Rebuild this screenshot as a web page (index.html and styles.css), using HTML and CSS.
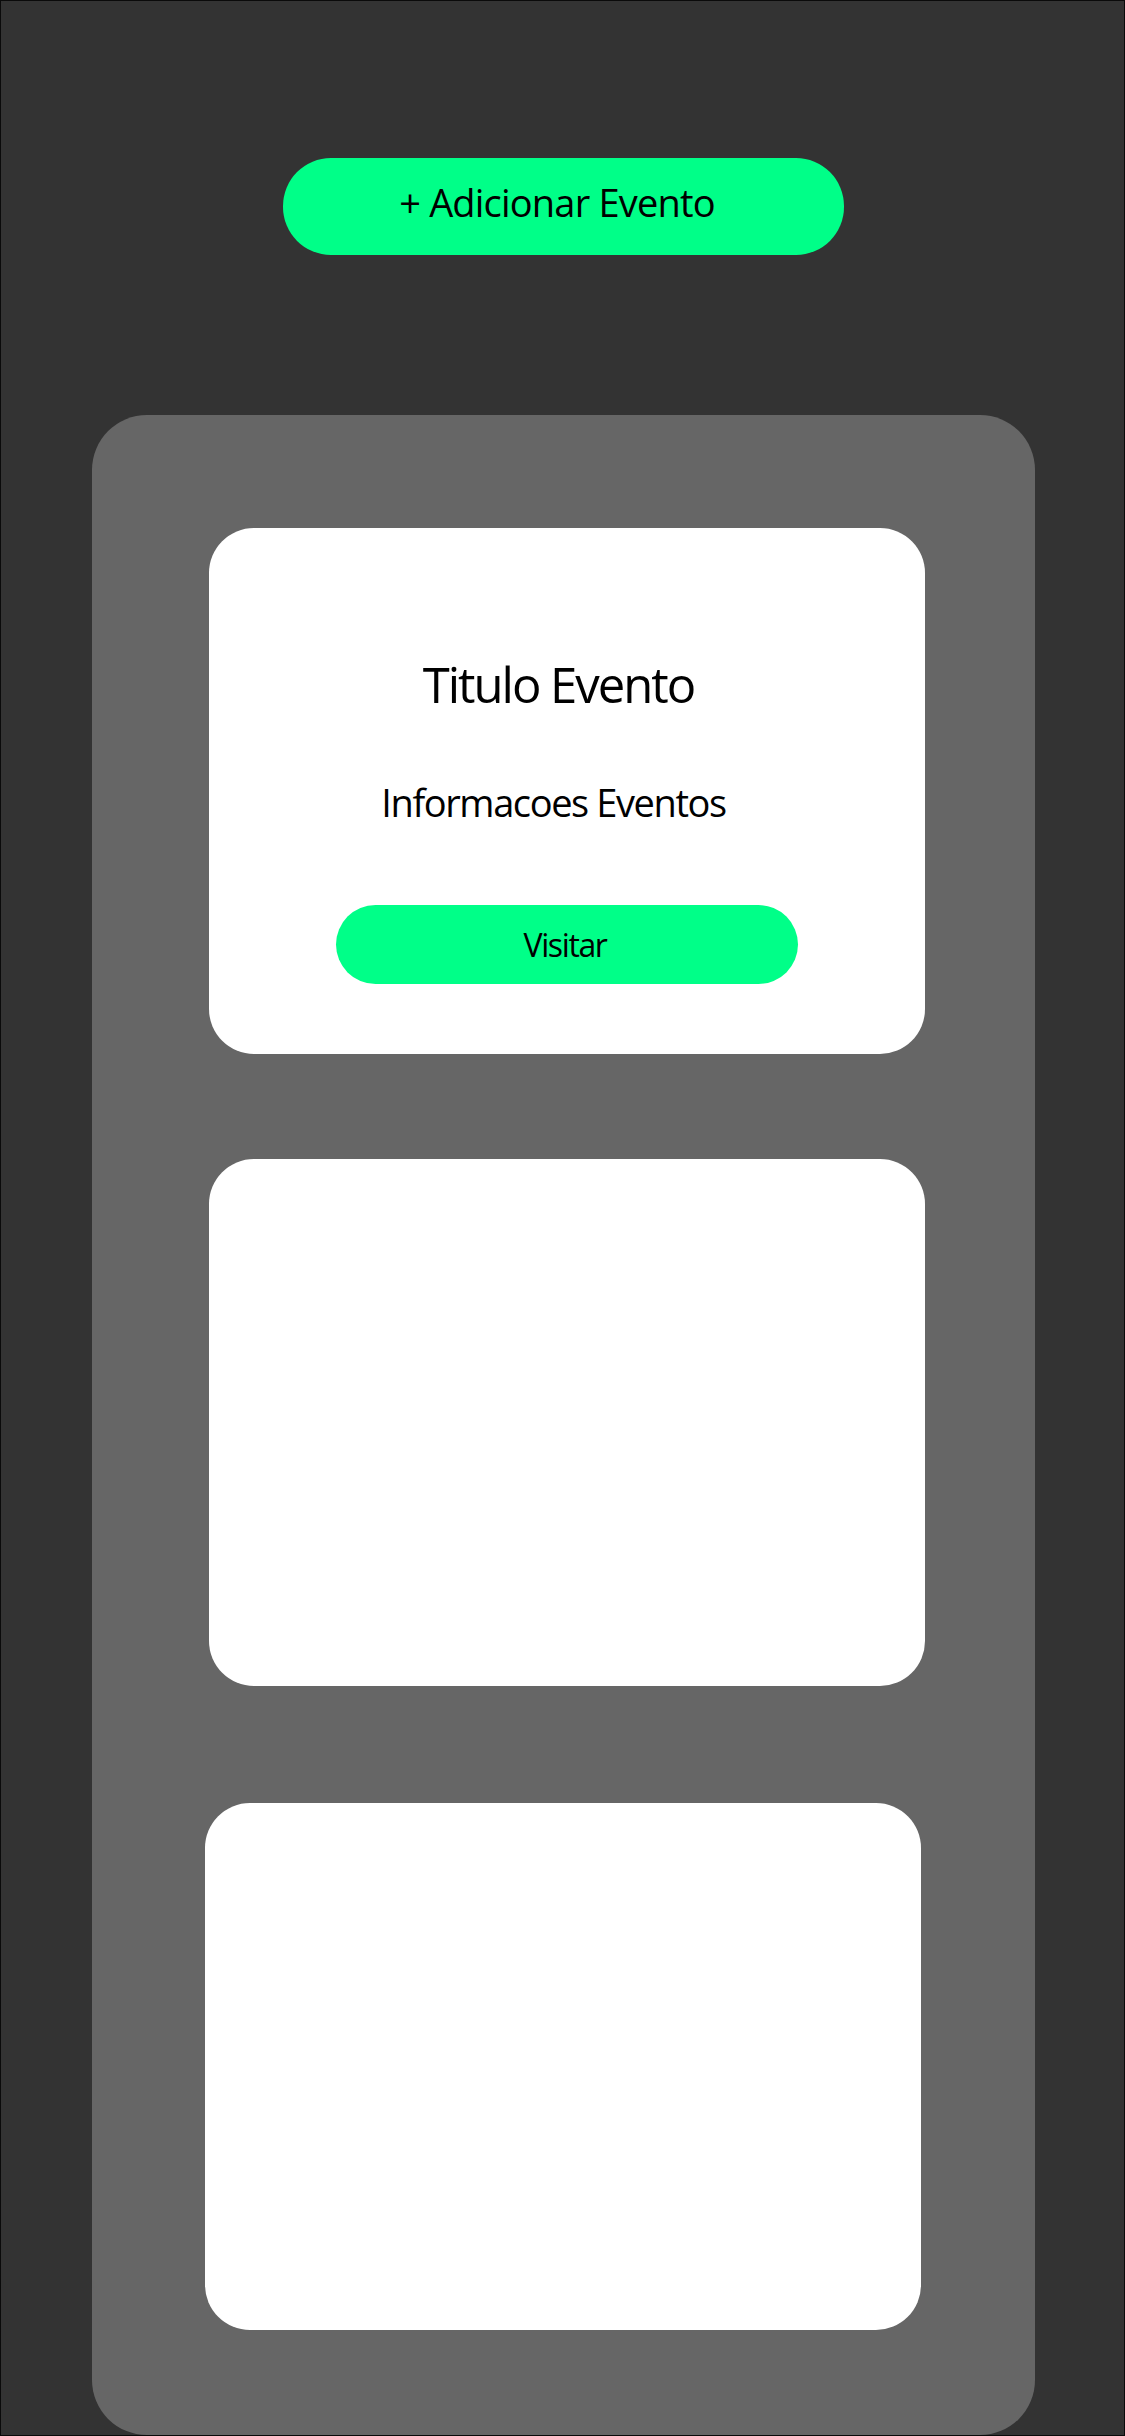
FILE: index.html
```html
<!DOCTYPE html>
<html lang="pt">
<head>
<meta charset="utf-8">
<title>Eventos</title>
<link rel="stylesheet" href="styles.css">
</head>
<body>
<div class="screen">
  <button class="add-btn" type="button">+ Adicionar Evento</button>
  <main class="panel">
    <section class="card card--info">
      <h2 class="card-title">Titulo Evento</h2>
      <p class="card-text">Informacoes Eventos</p>
      <button class="visit-btn" type="button">Visitar</button>
    </section>
    <section class="card card--second"></section>
    <section class="card card--third"></section>
  </main>
</div>
</body>
</html>
```
FILE: styles.css
```css
* { box-sizing: border-box; }
html, body { margin: 0; padding: 0; }
body {
  width: 1125px;
  height: 2436px;
  font-family: "Open Sans", "Liberation Sans", sans-serif;
  color: #000;
  background: #333333;
}
.screen {
  width: 1125px;
  height: 2436px;
  border: 1px solid #0a0a0a;
  background: #333333;
  padding-top: 157px;
  display: flex;
  flex-direction: column;
}
.add-btn {
  margin-left: 282px;
  width: 561px;
  height: 97px;
  border: 0;
  border-radius: 48px;
  background: #00ff88;
  color: #000;
  font-family: inherit;
  font-size: 38px;
  letter-spacing: -0.8px;
  line-height: 89px;
  padding: 0 13px 8px 0;
  text-align: center;
}
.panel {
  margin-top: 160px;
  margin-left: 91px;
  width: 943px;
  flex: 1;
  background: #666666;
  border-radius: 55px;
  padding: 113px 0 0 117px;
  display: flex;
  flex-direction: column;
}
.card {
  width: 716px;
  height: 526px;
  background: #ffffff;
  border-radius: 45px;
  flex: none;
}
.card--second { margin-top: 105px; height: 527px; }
.card--third { margin-top: 117px; margin-left: -4px; height: 527px; }
.card--info {
  display: flex;
  flex-direction: column;
  align-items: center;
  padding-top: 126px;
}
.card-title {
  margin: 0;
  font-size: 49px;
  font-weight: 400;
  letter-spacing: -2px;
  line-height: 60px;
  padding-right: 17px;
}
.card-text {
  margin: 63px 0 0;
  font-size: 38px;
  letter-spacing: -1.4px;
  line-height: 50px;
  padding-right: 27px;
}
.visit-btn {
  margin-top: 78px;
  width: 462px;
  height: 79px;
  border: 0;
  border-radius: 40px;
  background: #00ff88;
  color: #000;
  font-family: inherit;
  font-size: 32px;
  letter-spacing: -1.4px;
  line-height: 79px;
  padding: 0 4px 0 0;
}
```
